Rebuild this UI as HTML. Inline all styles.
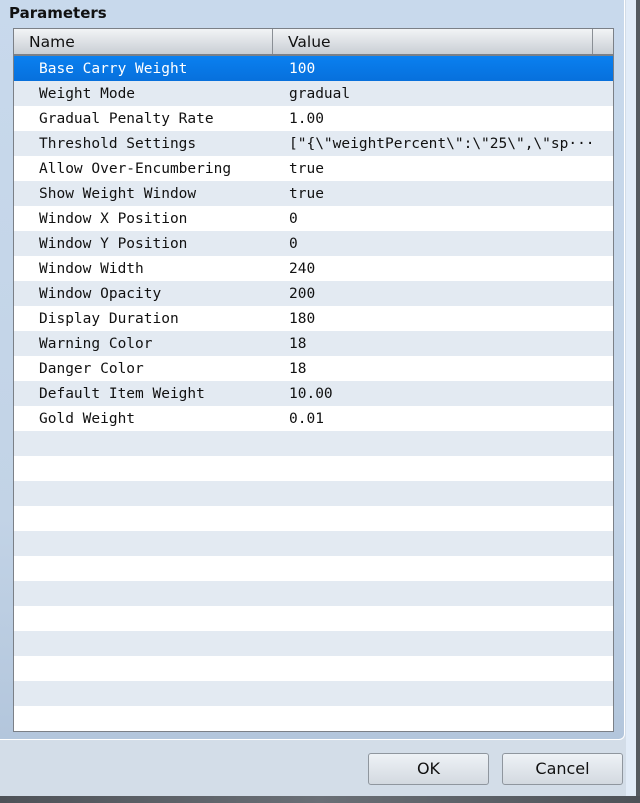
<!DOCTYPE html>
<html><head><style>
body{margin:0;width:640px;height:803px;background:#d3dde8;position:relative;overflow:hidden;font-family:"DejaVu Sans","Liberation Sans",sans-serif}
.grp{position:absolute;left:0;top:0;width:625px;height:740px;background:linear-gradient(#c8d9ec,#c2d3e6 70%,#b3c6dc);border-right:1px solid #fff;border-bottom:1px solid #fff;border-bottom-right-radius:6px;box-sizing:border-box}
.rs{position:absolute;left:626px;top:0;width:10px;height:796px;background:#e2ecf8}
.rd{position:absolute;left:636px;top:0;width:4px;height:803px;background:#555a60}
.bot{position:absolute;left:0;top:796px;width:640px;height:7px;background:linear-gradient(90deg,#4e5258,#6a6f76 50%,#4e5258)}
.title{position:absolute;left:9px;top:4px;font-weight:bold;font-size:15px;color:#111}
.tbl{position:absolute;left:13px;top:28px;width:601px;height:704px;border:1px solid #7b8087;box-sizing:border-box;background:#fff;overflow:hidden}
.hdr{height:27px;background:linear-gradient(#f2f4f6,#c9ced4);border-bottom:2px solid #7b8087;position:relative;font-size:15.5px;color:#111;box-sizing:border-box}
.hdr span{position:absolute;top:4px}
.hdr i{position:absolute;top:0;width:1px;height:25px;background:#8a8f95}
.row{height:25px;position:relative;font-family:"DejaVu Sans Mono","Liberation Mono",monospace;font-size:14.5px;color:#111}
.row:nth-child(even){background:#e3eaf2}
.row.sel{background:linear-gradient(#0a80f0,#0770dc);color:#fff}
.row span{position:absolute;top:5px;white-space:nowrap}
.n{left:25px}.v{left:275px}
.btn{position:absolute;top:753px;width:121px;height:32px;box-sizing:border-box;border:1px solid #8f969e;border-radius:3px;background:linear-gradient(#eef2f6,#d3d9e0);font-size:16px;text-align:center;line-height:30px;color:#111}
</style></head><body>
<div class="grp"></div><div class="rs"></div><div class="rd"></div><div class="bot"></div>
<div class="title">Parameters</div>
<div class="tbl">
<div class="hdr"><span style="left:15px">Name</span><i style="left:258px"></i><span style="left:274px">Value</span><i style="left:578px"></i></div>
<div id="rows">
<div class="row sel"><span class="n">Base Carry Weight</span><span class="v">100</span></div>
<div class="row"><span class="n">Weight Mode</span><span class="v">gradual</span></div>
<div class="row"><span class="n">Gradual Penalty Rate</span><span class="v">1.00</span></div>
<div class="row"><span class="n">Threshold Settings</span><span class="v">["{\"weightPercent\":\"25\",\"sp···</span></div>
<div class="row"><span class="n">Allow Over-Encumbering</span><span class="v">true</span></div>
<div class="row"><span class="n">Show Weight Window</span><span class="v">true</span></div>
<div class="row"><span class="n">Window X Position</span><span class="v">0</span></div>
<div class="row"><span class="n">Window Y Position</span><span class="v">0</span></div>
<div class="row"><span class="n">Window Width</span><span class="v">240</span></div>
<div class="row"><span class="n">Window Opacity</span><span class="v">200</span></div>
<div class="row"><span class="n">Display Duration</span><span class="v">180</span></div>
<div class="row"><span class="n">Warning Color</span><span class="v">18</span></div>
<div class="row"><span class="n">Danger Color</span><span class="v">18</span></div>
<div class="row"><span class="n">Default Item Weight</span><span class="v">10.00</span></div>
<div class="row"><span class="n">Gold Weight</span><span class="v">0.01</span></div>
<div class="row"></div><div class="row"></div><div class="row"></div><div class="row"></div><div class="row"></div><div class="row"></div><div class="row"></div><div class="row"></div><div class="row"></div><div class="row"></div><div class="row"></div><div class="row"></div><div class="row"></div>
</div>
</div>
<div class="btn" style="left:368px">OK</div>
<div class="btn" style="left:502px">Cancel</div>
</body></html>
